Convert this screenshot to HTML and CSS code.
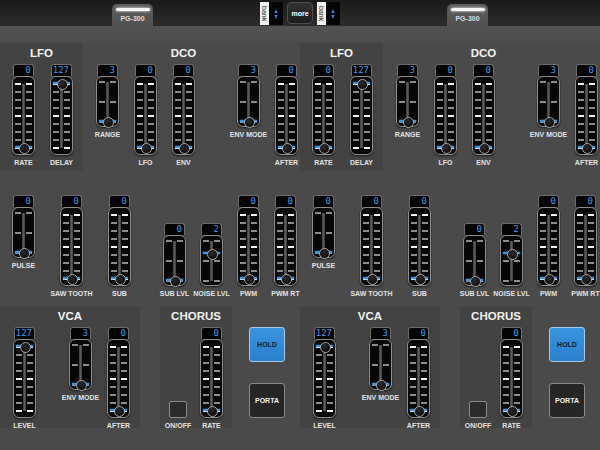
FILE: index.html
```html
<!DOCTYPE html>
<html lang="en">
<head>
    <meta charset="UTF-8">
    <meta name="viewport" content="width=device-width, initial-scale=1.0">
    <title>PG-300 Editor</title>
    <link rel="stylesheet" href="styles.css">
</head>
<body>
    <div class="topbar">
        <div class="tab"><div class="lamp"></div><span>PG-300</span></div>
        <div class="bank first">
            <div class="bank-label">bank</div>
            <div class="bank-arrows">
                <svg width="14" height="23" viewBox="0 0 14 23">
                    <polygon points="7,7 8.6,11 5.4,11" fill="#2f8ee6"/>
                    <polygon points="7,17 8.6,13 5.4,13" fill="#2f8ee6"/>
                </svg>
            </div>
        </div>
        <div class="more">more</div>
        <div class="bank">
            <div class="bank-label">bank</div>
            <div class="bank-arrows">
                <svg width="14" height="23" viewBox="0 0 14 23">
                    <polygon points="7,7 8.6,11 5.4,11" fill="#2f8ee6"/>
                    <polygon points="7,17 8.6,13 5.4,13" fill="#2f8ee6"/>
                </svg>
            </div>
        </div>
        <div class="tab last"><div class="lamp"></div><span>PG-300</span></div>
    </div>

    <div class="main" id="main">
        <div class="half">
            <!-- LFO / DCO -->
            <div class="row row1">
                <div class="sec box lfo">
                    <h2>LFO</h2>
                    <div class="sliders">
                        <div class="slider"><div class="lcd">0</div><div class="slot tall"><b class="knob k-min"></b></div><span>RATE</span></div>
                        <div class="slider"><div class="lcd">127</div><div class="slot tall"><b class="knob k-max"></b></div><span>DELAY</span></div>
                    </div>
                </div>
                <div class="sec dco">
                    <h2>DCO</h2>
                    <div class="sliders">
                        <div class="slider"><div class="lcd">3</div><div class="slot short"><b class="knob k-low"></b></div><span>RANGE</span></div>
                        <div class="slider"><div class="lcd">0</div><div class="slot tall"><b class="knob k-min"></b></div><span>LFO</span></div>
                        <div class="slider"><div class="lcd">0</div><div class="slot tall"><b class="knob k-min"></b></div><span>ENV</span></div>
                        <div class="slider wide-left"><div class="lcd">3</div><div class="slot short"><b class="knob k-low"></b></div><span>ENV MODE</span></div>
                        <div class="slider"><div class="lcd">0</div><div class="slot tall"><b class="knob k-min"></b></div><span>AFTER</span></div>
                    </div>
                </div>
            </div>

            <!-- waveforms -->
            <div class="row row2">
                <div class="group wave">
                    <div class="slider"><div class="lcd">0</div><div class="slot short"><b class="knob k-low"></b></div><span>PULSE</span></div>
                    <div class="slider"><div class="lcd">0</div><div class="slot tall"><b class="knob k-min"></b></div><span>SAW TOOTH</span></div>
                    <div class="slider"><div class="lcd">0</div><div class="slot tall"><b class="knob k-min"></b></div><span>SUB</span></div>
                </div>
                <div class="group levels">
                    <div class="slider"><div class="lcd">0</div><div class="slot short"><b class="knob k-low"></b></div><span>SUB LVL</span></div>
                    <div class="slider"><div class="lcd">2</div><div class="slot short"><b class="knob k-two"></b></div><span>NOISE LVL</span></div>
                    <div class="slider"><div class="lcd">0</div><div class="slot tall"><b class="knob k-min"></b></div><span>PWM</span></div>
                    <div class="slider"><div class="lcd">0</div><div class="slot tall"><b class="knob k-min"></b></div><span>PWM RT</span></div>
                </div>
            </div>

            <!-- VCA / CHORUS -->
            <div class="row row3">
                <div class="sec box vca">
                    <h2>VCA</h2>
                    <div class="sliders">
                        <div class="slider"><div class="lcd">127</div><div class="slot tall"><b class="knob k-max"></b></div><span>LEVEL</span></div>
                        <div class="slider env-mode"><div class="lcd">3</div><div class="slot short"><b class="knob k-low"></b></div><span>ENV MODE</span></div>
                        <div class="slider after"><div class="lcd">0</div><div class="slot tall"><b class="knob k-min"></b></div><span>AFTER</span></div>
                    </div>
                </div>
                <div class="sec box chorus">
                    <h2>CHORUS</h2>
                    <div class="sliders">
                        <div class="switch"><div class="toggle"></div><span>ON/OFF</span></div>
                        <div class="slider"><div class="lcd">0</div><div class="slot tall"><b class="knob k-min"></b></div><span>RATE</span></div>
                    </div>
                </div>
                <div class="pads">
                    <div class="pad hold">HOLD</div>
                    <div class="pad porta">PORTA</div>
                </div>
            </div>
        </div>
    </div>

<script>
// second part of the editor is the same panel
const main = document.getElementById('main');
main.appendChild(main.querySelector('.half').cloneNode(true));
</script>
</body>
</html>
```

FILE: styles.css
```css
* {
    box-sizing: border-box;
}
body {
    margin: 0;
    width: 600px;
    height: 450px;
    overflow: hidden;
    background-color: #4a4a4a;
    font-family: "Liberation Sans", Arial, sans-serif;
    color: #e4e4e4;
}

/* top bar */
.topbar {
    height: 26px;
    display: flex;
    padding-left: 112px;
    background: linear-gradient(#1a1a1a, #2c2c2c);
}
.tab {
    width: 41px;
    height: 22px;
    margin-top: 4px;
    border-radius: 5px 5px 0 0;
    background: linear-gradient(#5c5c5c, #515151);
    display: flex;
    flex-direction: column;
    align-items: center;
}
.tab.last {
    margin-left: 107px;
}
.lamp {
    width: 34px;
    height: 3px;
    margin-top: 4px;
    border-radius: 2px;
    background-color: #f6f6f6;
    box-shadow: 0 0 3px #ffffff;
}
.tab span {
    margin-top: 4px;
    font-size: 7px;
    font-weight: bold;
    color: #dcdcdc;
}
.bank {
    display: flex;
    height: 23px;
    margin-top: 2px;
    margin-left: 4px;
}
.bank.first {
    margin-left: 107px;
}
.bank-label {
    width: 9px;
    background-color: #f4f4f4;
    color: #111;
    writing-mode: vertical-rl;
    font-size: 7px;
    line-height: 9px;
    text-align: center;
}
.bank-arrows {
    width: 14px;
    background-color: #050505;
}
.bank-arrows svg {
    display: block;
}
.more {
    width: 26px;
    height: 22px;
    margin-top: 2px;
    margin-left: 4px;
    border: 1px solid #4e4e4e;
    border-radius: 4px;
    background: linear-gradient(#333, #1c1c1c);
    color: #fff;
    font-size: 7px;
    font-weight: bold;
    display: flex;
    align-items: center;
    justify-content: center;
}

/* panel */
.main {
    display: flex;
    height: 424px;
    background: linear-gradient(#525252 0, #4e4e4e 14px, #4a4a4a 18px);
}
.half {
    width: 300px;
    flex-shrink: 0;
}
.row {
    display: flex;
    align-items: flex-start;
}
.row1 {
    height: 149px;
    padding-top: 17px;
}
.row2 {
    height: 125px;
    padding-top: 20px;
    padding-left: 12px;
}
.row3 {
    height: 150px;
    padding-top: 6px;
}
.sec {
    padding-top: 3px;
}
.sec h2 {
    margin: 0;
    font-size: 11.5px;
    line-height: 14px;
    text-align: center;
    color: #f2f2f2;
}
.box {
    background-color: #434343;
}
.sliders {
    display: flex;
    margin-top: 4px;
}
.lfo {
    width: 83px;
    height: 128px;
}
.lfo .sliders {
    padding-left: 12px;
    gap: 15px;
}
.dco {
    width: 217px;
}
.dco h2 {
    padding-right: 16px;
}
.dco .sliders {
    padding-left: 13px;
    gap: 15px;
}
.wide-left {
    margin-left: 27px;
}
.group {
    display: flex;
}
.wave {
    gap: 25px;
}
.levels {
    gap: 14px;
    margin-left: 32px;
    align-items: flex-end;
}
.vca {
    width: 140px;
    height: 122px;
}
.vca .sliders {
    padding-left: 13px;
}
.env-mode {
    margin-left: 33px;
}
.after {
    margin-left: 15px;
}
.chorus {
    width: 72px;
    height: 122px;
    margin-left: 20px;
}
.chorus .sliders {
    padding-left: 9px;
    align-items: flex-end;
}
.chorus .slider {
    margin-left: 13px;
}

/* slider */
.slider, .switch {
    width: 23px;
    display: flex;
    flex-direction: column;
    align-items: center;
}
.switch {
    width: 18px;
}
.slider span, .switch span {
    margin-top: 4px;
    font-size: 7px;
    line-height: 8px;
    font-weight: bold;
    white-space: nowrap;
    color: #e2e2e2;
}
.lcd {
    width: 21px;
    height: 12px;
    padding-right: 2px;
    border: 1px solid #6c6c6c;
    border-bottom: none;
    border-radius: 3px 3px 0 0;
    background-color: #040404;
    color: #3a9bef;
    font-family: "DejaVu Sans Mono", monospace;
    font-size: 9px;
    line-height: 11px;
    text-align: right;
}
.slot {
    position: relative;
    width: 23px;
    border: 1px solid #8e8e8e;
    border-radius: 6px;
    background-color: #070707;
    background-repeat: no-repeat;
    box-shadow: 0 1px 2px #1a1a1a;
}
.slot.tall {
    height: 79px;
    background-image:
        repeating-linear-gradient(#f2f2f2 0 2px, transparent 2px 32px),
        repeating-linear-gradient(#f2f2f2 0 2px, transparent 2px 32px),
        repeating-linear-gradient(#8c8c8c 0 2px, transparent 2px 8px),
        repeating-linear-gradient(#8c8c8c 0 2px, transparent 2px 8px),
        linear-gradient(90deg, #3a3a3a, #5c5c5c, #3a3a3a);
    background-size: 6px 66px, 6px 66px, 6px 66px, 6px 66px, 3px 64px;
    background-position: 2px 6px, 13px 6px, 2px 6px, 13px 6px, 9px 7px;
}
.slot.short {
    height: 51px;
    background-image:
        repeating-linear-gradient(#8c8c8c 0 2px, transparent 2px 20px),
        repeating-linear-gradient(#8c8c8c 0 2px, transparent 2px 20px),
        linear-gradient(90deg, #3a3a3a, #5c5c5c, #3a3a3a);
    background-size: 6px 42px, 6px 42px, 3px 40px;
    background-position: 2px 4px, 13px 4px, 9px 5px;
}
.knob {
    position: absolute;
    left: 0;
    right: 0;
    height: 9px;
}
.knob::before {
    content: "";
    position: absolute;
    left: 2px;
    right: 2px;
    top: 3px;
    height: 2px;
    background-color: #3b93dd;
    box-shadow: 0 0 2px #4aa3f0;
}
.knob::after {
    content: "";
    position: absolute;
    left: 6px;
    top: 0;
    width: 9px;
    height: 9px;
    border-radius: 50%;
    border: 1px solid #a4a4a4;
    background: radial-gradient(circle at 40% 35%, #2a2a2a, #050505);
}
.k-min {
    top: 66px;
}
.k-max {
    top: 2px;
}
.k-low {
    top: 40px;
}
.k-two {
    top: 13px;
}

/* buttons */
.toggle {
    width: 18px;
    height: 17px;
    border: 1px solid #8a8a8a;
    border-radius: 2px;
    background-color: #2b2b2b;
}
.pads {
    display: flex;
    flex-direction: column;
    gap: 21px;
    margin-left: 17px;
    padding-top: 21px;
}
.pad {
    width: 36px;
    height: 35px;
    border-radius: 3px;
    font-size: 7px;
    font-weight: bold;
    display: flex;
    align-items: center;
    justify-content: center;
}
.hold {
    border: 1px solid #a9c8e4;
    background: linear-gradient(#3a94de, #2a7fcb);
    color: #14202e;
}
.porta {
    border: 1px solid #8a8a8a;
    background-color: #262626;
    color: #f0f0f0;
}
```
